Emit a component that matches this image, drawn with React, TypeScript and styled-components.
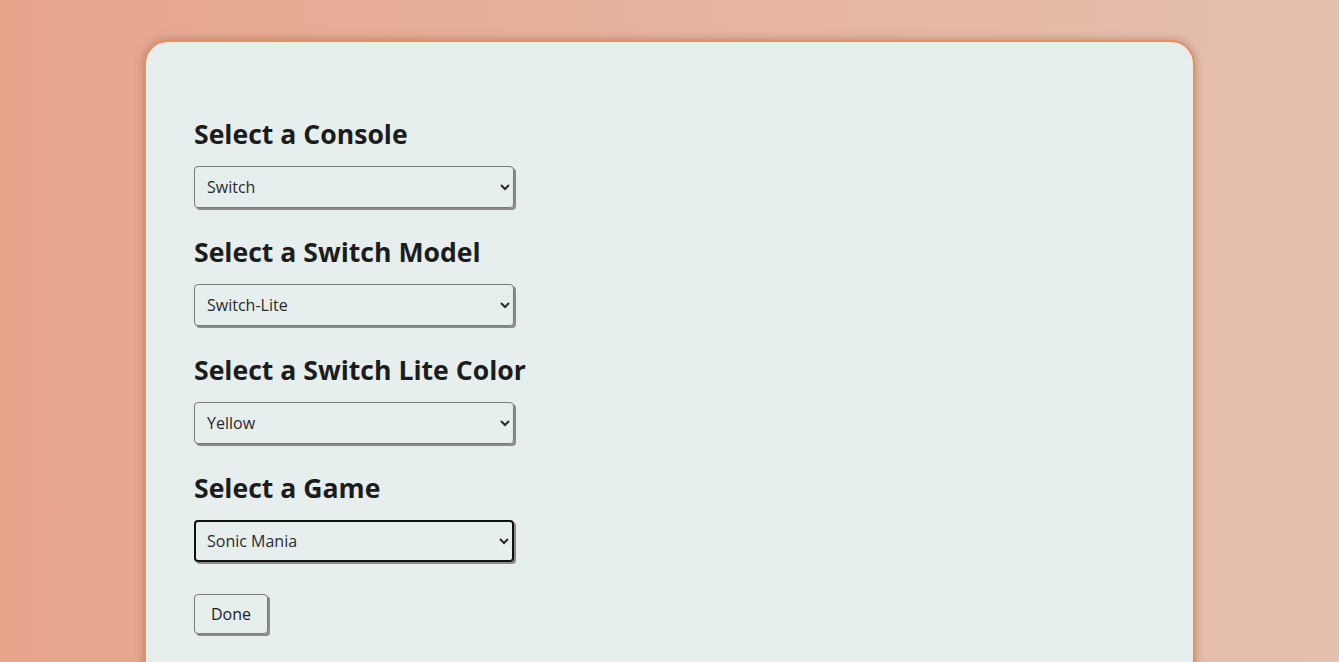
import React, { useState } from 'react';
import styled, { createGlobalStyle } from 'styled-components';

const GlobalStyle = createGlobalStyle`
	html, body {
		margin: 0;
		padding: 0;
	}

	body {
		min-height: 100vh;
		background: linear-gradient(to right, #e7a58c, #e5c0af);
		font-family: 'Open Sans', 'Noto Sans', sans-serif;
		overflow: hidden;
	}
`;

const Page = styled.div`
	padding-top: 40px;
`;

const Card = styled.div`
	width: 1051px;
	min-height: 700px;
	margin: 0 auto;
	box-sizing: border-box;
	background: #e6efee;
	border: 2px solid #e98f66;
	border-radius: 24px;
	box-shadow: 0 0 10px rgba(90, 50, 30, 0.35);
	padding: 75px 48px;
`;

const Form = styled.form`
	display: flex;
	flex-direction: column;
	align-items: flex-start;
`;

const Group = styled.div`
	display: flex;
	flex-direction: column;
	align-items: flex-start;
	margin-bottom: 27px;
`;

const Title = styled.h2`
	margin: 0 0 14px;
	font-size: 26.6px;
	font-weight: 700;
	line-height: 35px;
	color: #1c1c1c;
`;

const Select = styled.select<{ $active?: boolean }>`
	width: 320px;
	height: 42px;
	padding: 0 8px 0 ${(p) => (p.$active ? '7px' : '8px')};
	box-sizing: border-box;
	font-family: 'Open Sans', 'Noto Sans', sans-serif;
	font-size: 16px;
	color: #2a2a2a;
	background: transparent;
	border: ${(p) => (p.$active ? '2px solid #111' : '1px solid #7a7a7a')};
	border-radius: 4px;
	box-shadow: 2px 2px 0 #8a8a8a;
	outline: none;
`;

const Button = styled.button`
	margin-top: 5px;
	width: 74px;
	height: 40px;
	font-family: 'Open Sans', 'Noto Sans', sans-serif;
	font-size: 16px;
	color: #222;
	background: transparent;
	border: 1px solid #7a7a7a;
	border-radius: 4px;
	box-shadow: 2px 2px 0 #8a8a8a;
	cursor: pointer;
`;

export default function App() {
	const [console_, setConsole] = useState('Switch');
	const [model, setModel] = useState('Switch-Lite');
	const [color, setColor] = useState('Yellow');
	const [game, setGame] = useState('Sonic Mania');

	return (
		<Page>
			<GlobalStyle />
			<Card>
				<Form onSubmit={(e) => e.preventDefault()}>
					<Group>
						<Title>Select a Console</Title>
						<Select value={console_} onChange={(e) => setConsole(e.target.value)}>
							<option>Switch</option>
							<option>PS5</option>
							<option>Xbox Series X</option>
						</Select>
					</Group>
					<Group>
						<Title>Select a Switch Model</Title>
						<Select value={model} onChange={(e) => setModel(e.target.value)}>
							<option>Switch</option>
							<option>Switch-Lite</option>
							<option>Switch-OLED</option>
						</Select>
					</Group>
					<Group>
						<Title>Select a Switch Lite Color</Title>
						<Select value={color} onChange={(e) => setColor(e.target.value)}>
							<option>Yellow</option>
							<option>Turquoise</option>
							<option>Coral</option>
							<option>Gray</option>
						</Select>
					</Group>
					<Group>
						<Title>Select a Game</Title>
						<Select $active value={game} onChange={(e) => setGame(e.target.value)}>
							<option>Sonic Mania</option>
							<option>Mario Kart 8 Deluxe</option>
							<option>Zelda: Breath of the Wild</option>
						</Select>
					</Group>
					<Button type="submit">Done</Button>
				</Form>
			</Card>
		</Page>
	);
}
